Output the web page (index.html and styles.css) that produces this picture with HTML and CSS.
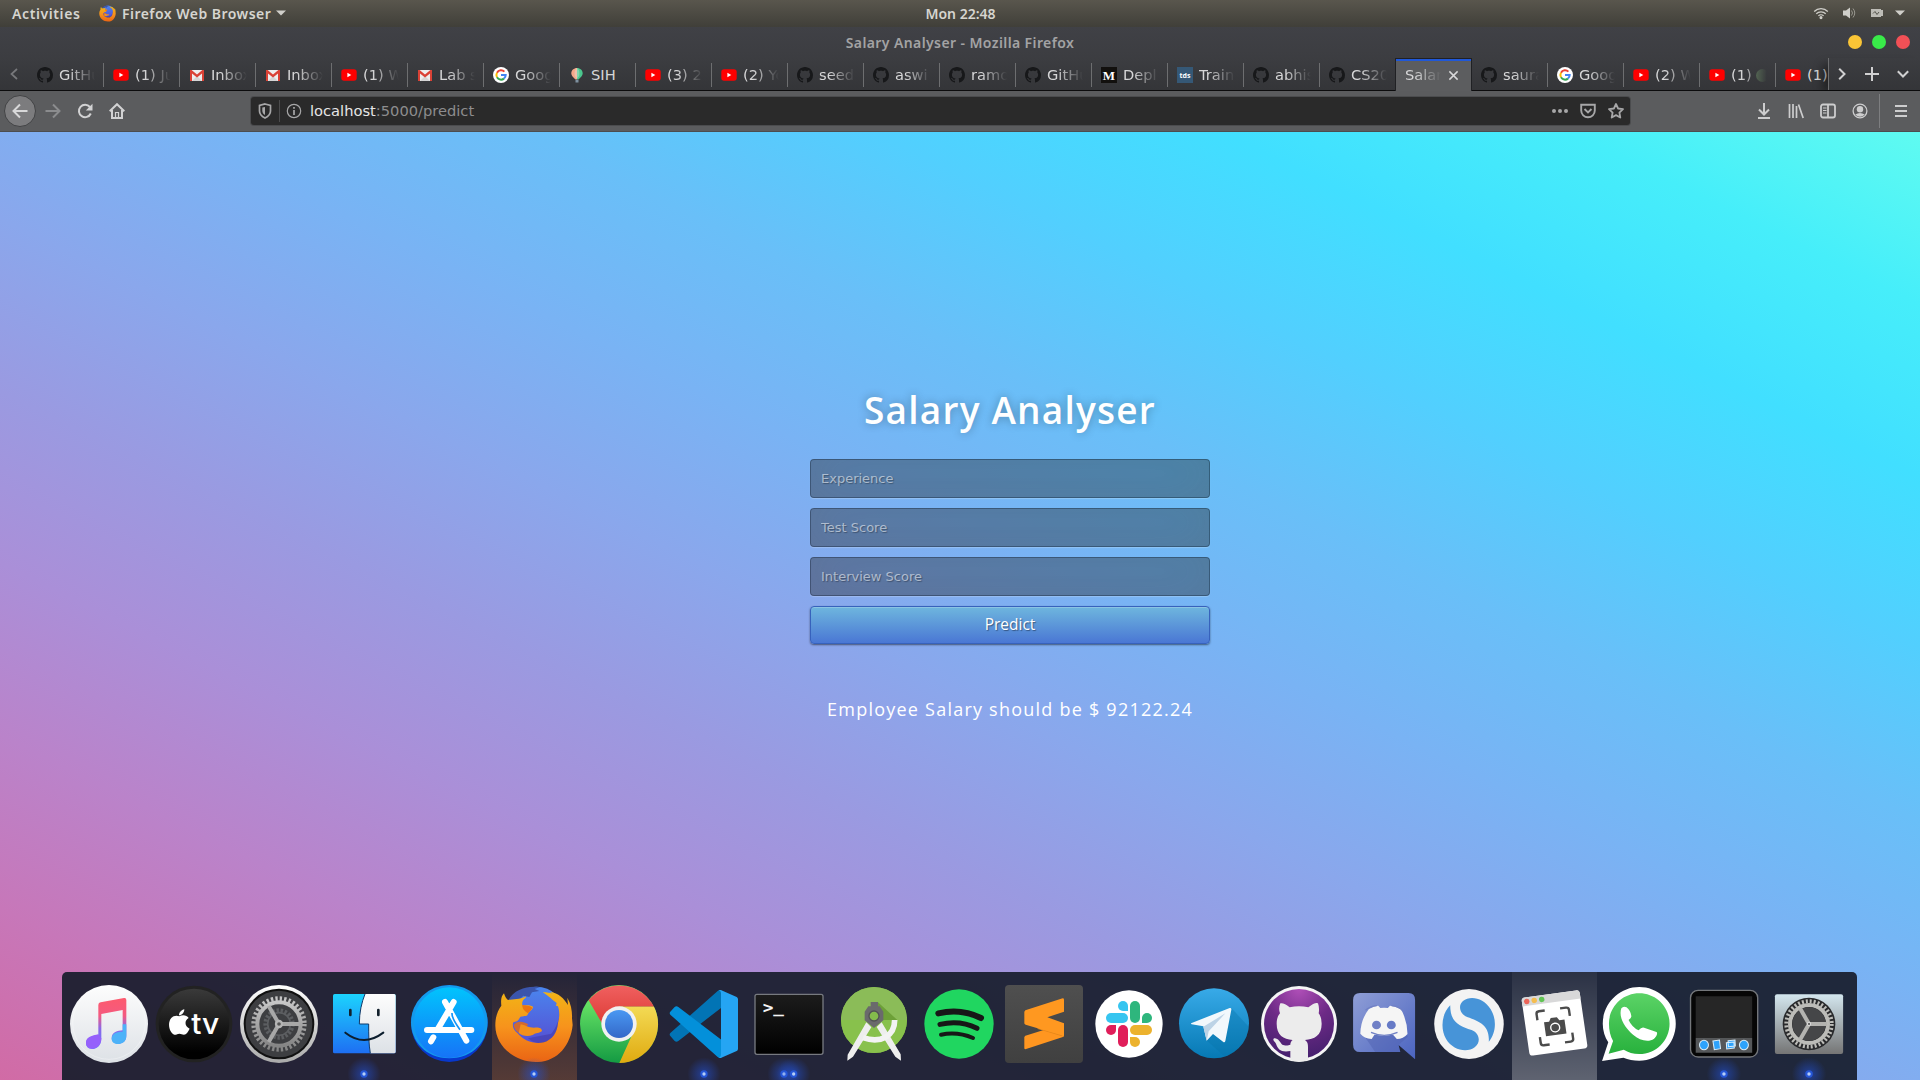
FILE: index.html
```html
<!DOCTYPE html>
<html lang="en">
<head>
<meta charset="utf-8">
<title>Salary Analyser</title>
<link rel="stylesheet" href="styles.css">
</head>
<body>
<svg class="defs" aria-hidden="true">
  <defs>
    <linearGradient id="fox" x1="0" y1="0" x2="0" y2="1"><stop offset="0" stop-color="#f2b416"/><stop offset=".5" stop-color="#f7931c"/><stop offset="1" stop-color="#ea6414"/></linearGradient>
    <linearGradient id="foxblue" x1="0" y1="0" x2="0" y2="1"><stop offset="0" stop-color="#4a86ee"/><stop offset="1" stop-color="#5550d4"/></linearGradient>
    <linearGradient id="musicnote" x1="0" y1="0" x2="0" y2="1"><stop offset="0" stop-color="#fd5a6e"/><stop offset=".35" stop-color="#f45a80"/><stop offset=".6" stop-color="#8a68e8"/><stop offset="1" stop-color="#6a7cff"/></linearGradient>
    <linearGradient id="white" x1="0" y1="0" x2="0" y2="1"><stop offset="0" stop-color="#fdfdfd"/><stop offset="1" stop-color="#dde1e6"/></linearGradient>
    <linearGradient id="black" x1="0" y1="0" x2="0" y2="1"><stop offset="0" stop-color="#3a3a3a"/><stop offset=".9" stop-color="#000"/></linearGradient>
    <linearGradient id="steel" x1="0" y1="0" x2="0" y2="1"><stop offset="0" stop-color="#fff"/><stop offset="1" stop-color="#aaa"/></linearGradient>
    <linearGradient id="gear" x1="0" y1="0" x2="0" y2="1"><stop offset="0" stop-color="#c6c6c6"/><stop offset="1" stop-color="#858585"/></linearGradient>
    <linearGradient id="finder" x1="0" y1="0" x2="0" y2="1"><stop offset="0" stop-color="#1cd3fd"/><stop offset="1" stop-color="#1e6ff3"/></linearGradient>
    <linearGradient id="store" x1="0" y1="0" x2="0" y2="1"><stop offset="0" stop-color="#01c4fd"/><stop offset="1" stop-color="#1673f7"/></linearGradient>
    <linearGradient id="chromered" x1="0" y1="0" x2="0" y2="1"><stop offset="0" stop-color="#f06060"/><stop offset="1" stop-color="#dd3c36"/></linearGradient>
    <linearGradient id="chromegreen" x1="0" y1="0" x2="0" y2="1"><stop offset="0" stop-color="#63e063"/><stop offset=".25" stop-color="#63e063"/><stop offset="1" stop-color="#149a43"/></linearGradient>
    <linearGradient id="chromeyellow" x1="0" y1="0" x2="0" y2="1"><stop offset="0" stop-color="#f3da54"/><stop offset="1" stop-color="#e0aa10"/></linearGradient>
    <linearGradient id="chromeblue" x1="0" y1="0" x2="0" y2="1"><stop offset="0" stop-color="#4a98f2"/><stop offset="1" stop-color="#3468c8"/></linearGradient>
    <linearGradient id="term" x1="0" y1="0" x2="0" y2="1"><stop offset="0" stop-color="#1c1c1c"/><stop offset="1" stop-color="#000"/></linearGradient>
    <linearGradient id="telegram" x1="0" y1="0" x2="0" y2="1"><stop offset="0" stop-color="#38aae8"/><stop offset="1" stop-color="#0679b4"/></linearGradient>
    <radialGradient id="octo" cx=".5" cy="0" r="1"><stop offset="0" stop-color="#b04fb8"/><stop offset=".5" stop-color="#6d2a86"/><stop offset="1" stop-color="#45206e"/></radialGradient>
    <linearGradient id="discord" x1="0" y1="0" x2="1" y2="1"><stop offset="0" stop-color="#8f9ed6"/><stop offset="1" stop-color="#4b64c0"/></linearGradient>
    <linearGradient id="whatsapp" x1="0" y1="0" x2="0" y2="1"><stop offset="0" stop-color="#5bd366"/><stop offset="1" stop-color="#28b13d"/></linearGradient>
    <linearGradient id="plate" x1="0" y1="0" x2="0" y2="1"><stop offset="0" stop-color="#d3e6ee"/><stop offset="1" stop-color="#757575"/></linearGradient>
    <linearGradient id="sublime" x1="0" y1="0" x2="0" y2="1"><stop offset="0" stop-color="#4f4f4f"/><stop offset="1" stop-color="#404040"/></linearGradient>
    <radialGradient id="glow"><stop offset="0" stop-color="#2352d8" stop-opacity=".6"/><stop offset="1" stop-color="#2352d8" stop-opacity="0"/></radialGradient>
    <symbol id="dot" viewBox="0 0 120 120" overflow="visible"><circle cx="60" cy="60" r="50" fill="url(#glow)"/><circle cx="60" cy="60" r="11" fill="#2656d6"/><circle cx="60" cy="60" r="5" fill="#b4cdf8"/></symbol>
    <symbol id="gh" viewBox="0 0 16 16"><path d="M8 0C3.58 0 0 3.58 0 8c0 3.54 2.29 6.53 5.47 7.59.4.07.55-.17.55-.38 0-.19-.01-.82-.01-1.49-2.01.37-2.53-.49-2.69-.94-.09-.23-.48-.94-.82-1.13-.28-.15-.68-.52-.01-.53.63-.01 1.08.58 1.23.82.72 1.21 1.87.87 2.33.66.07-.52.28-.87.51-1.07-1.78-.2-3.64-.89-3.64-3.95 0-.87.31-1.59.82-2.15-.08-.2-.36-1.02.08-2.12 0 0 .67-.21 2.2.82.64-.18 1.32-.27 2-.27s1.36.09 2 .27c1.53-1.04 2.2-.82 2.2-.82.44 1.1.16 1.92.08 2.12.51.56.82 1.27.82 2.15 0 3.07-1.87 3.75-3.65 3.95.29.25.54.73.54 1.48 0 1.07-.01 1.93-.01 2.2 0 .21.15.46.55.38A8.01 8.01 0 0 0 16 8c0-4.42-3.58-8-8-8z" fill="#17181a"/></symbol>
    <symbol id="yt" viewBox="0 0 16 16"><rect x=".3" y="2.2" width="15.4" height="11.6" rx="2.8" fill="#f00"/><path d="M6.4 5.7v4.6L10.3 8z" fill="#fff"/></symbol>
    <symbol id="gm" viewBox="0 0 16 16"><path d="M1 3h14v11H1z" fill="#eee"/><path d="M3 14l5-5 5 5z" fill="#d5d5d5"/><path d="M1 3h1.6L8 7.6 13.4 3H15v11h-2V6.5L8 10.6 3 6.5V14H1z" fill="#da4236"/></symbol>
    <symbol id="gg" viewBox="0 0 16 16"><circle cx="8" cy="8" r="8" fill="#fff"/><g fill="none" stroke-width="2"><path d="M4 5.7A4.7 4.7 0 0 1 11.4 4.6" stroke="#ea4335"/><path d="M4 5.7A4.7 4.7 0 0 0 4 10.3" stroke="#fbbc05"/><path d="M4 10.3A4.7 4.7 0 0 0 11 11.6" stroke="#34a853"/><path d="M11 11.6A4.7 4.7 0 0 0 12.7 8H8" stroke="#4285f4"/></g></symbol>
    <symbol id="sih" viewBox="0 0 16 16"><path d="M8 1C4.800 1 2.300 3.300 2.300 6.200 2.300 9 5.500 11.500 6.500 12.500H8z" fill="#f5a88a"/><path d="M8 1c3.200 0 5.700 2.300 5.700 5.200 0 2.800-3.200 5.300-4.200 6.300H8z" fill="#4bc78e"/><path d="M8 1c-2 1.500-3 4-2.200 8L8 12zM8 1c2 1.500 3 4 2.200 8L8 12z" fill="#e8f1ea" opacity=".35"/><rect x="6.500" y="12.800" width="3" height="2.700" fill="#7f91a0"/></symbol>
    <symbol id="med" viewBox="0 0 16 16"><path d="M0 0h16v16H0z" fill="#12100e"/><text x="8" y="12.500" text-anchor="middle" font-family="Liberation Serif, serif" font-weight="bold" font-size="13" fill="#fff">M</text></symbol>
    <symbol id="tds" viewBox="0 0 16 16"><path d="M0 0h16v16H0z" fill="#355876"/><text x="8" y="10.500" text-anchor="middle" font-family="Open Sans, sans-serif" font-weight="bold" font-size="7" fill="#fff">tds</text></symbol>
    <symbol id="firefox" viewBox="12 60 240 234"><circle cx="139" cy="150" r="85" fill="url(#foxblue)"/><path d="M52 112C70 72 110 62 150 66l-16 6 14 6-22 4-8 14-18-4-12 12-20 8z" fill="#3b55ac"/><path d="M212 130q8 30-6 56-14 46-56 50-20-2-36-16l70-14q24-30 28-76z" fill="#4440b0" opacity=".7"/><path d="M42 85c3 11 6 15 12 20 16-4 36-2 52-10 4-2 2 4-4 8-6 6-6 12-5 18 12 0 22-2 32 4 0 10-12 12-17 26-6 4-18 2-22 6-4 8-6 12-20 15-4 10 0 24 12 32 20 24 50 34 80 28 24-8 40-28 42-58 6-24 4-36 0-50l-6-2 2-8c-12-8-22-20-42-32 14 0 22 2 30 4l-8-6c26 4 42 20 54 40l-2-22c12 20 15 44 14 62l2 20c-6 60-44 108-104 111C78 294 17 246 16 182c0-26 6-44 18-60-2-20 0-28 8-37z" fill="url(#fox)"/><path d="M97 119c10 4 20 0 31 10-5 6-8 8-14 16-10-6-18-14-17-26zM71 180c8-12 26-14 44-2-8 8-12 14-6 24-16 6-34 2-38-22z" fill="#e96b10" opacity=".85"/><path d="M92 178c18 4 24 10 40 10 12-2 24 0 24 10-8 8-18 4-28 12-16 6-32 2-42-6z" fill="#f2901c"/></symbol>
  </defs>
</svg>

<header class="shell">
  <div class="shell-left">
    <span class="activities">Activities</span>
    <svg class="shell-fox"><use href="#firefox"/></svg>
    <span class="app-name">Firefox Web Browser</span>
    <svg width="10" height="6" viewBox="0 0 10 6"><path d="M0 .5h10L5 5.500z" fill="#d0cfca"/></svg>
  </div>
  <span class="clock">Mon 22:48</span>
  <div class="shell-right">
    <svg width="16" height="16" viewBox="0 0 16 16" fill="none" stroke="#d0cfca" stroke-width="1.300"><path d="M1.200 6.500a9.600 9.600 0 0 1 13.600 0M3.300 8.800a6.600 6.600 0 0 1 9.400 0M5.400 10.900a3.700 3.700 0 0 1 5.200 0"/><circle cx="8" cy="12.600" r=".9" fill="#d0cfca"/></svg>
    <svg width="16" height="16" viewBox="0 0 16 16"><path d="M2 5.500h3L9 2.500v11l-4-3H2z" fill="#d0cfca"/><path d="M10.500 5.500q2 2.500 0 5M12 3.500q3.500 4.500 0 9" fill="none" stroke="#999890"/></svg>
    <svg width="16" height="16" viewBox="0 0 16 16"><path d="M2 4h10v1h2v6h-2v1H2z" fill="#bdbcb6"/><path d="M4 8.500l2-2 2 3 2-2.500" fill="none" stroke="#55544c"/></svg>
    <svg width="10" height="6" viewBox="0 0 10 6"><path d="M0 .5h10L5 5.500z" fill="#d0cfca"/></svg>
  </div>
</header>

<div class="titlebar">
  <span></span>
  <span class="window-title">Salary Analyser - Mozilla Firefox</span>
  <div class="window-buttons"><i class="min"></i><i class="max"></i><i class="close"></i></div>
</div>

<nav class="tabbar">
  <div class="scroll-left"><svg width="8" height="12" viewBox="0 0 8 12"><path d="M7 1L1.500 6 7 11" fill="none" stroke="#77787b" stroke-width="1.700"/></svg></div>
  <div class="tabs">
    <div class="tab"><svg><use href="#gh"/></svg><span>GitHub</span></div>
    <div class="tab"><svg><use href="#yt"/></svg><span>(1) Ju</span></div>
    <div class="tab"><svg><use href="#gm"/></svg><span>Inbox</span></div>
    <div class="tab"><svg><use href="#gm"/></svg><span>Inbox</span></div>
    <div class="tab"><svg><use href="#yt"/></svg><span>(1) W</span></div>
    <div class="tab"><svg><use href="#gm"/></svg><span>Lab s</span></div>
    <div class="tab"><svg><use href="#gg"/></svg><span>Goog</span></div>
    <div class="tab"><svg><use href="#sih"/></svg><span class="short">SIH</span></div>
    <div class="tab"><svg><use href="#yt"/></svg><span>(3) 2</span></div>
    <div class="tab"><svg><use href="#yt"/></svg><span>(2) Yo</span></div>
    <div class="tab"><svg><use href="#gh"/></svg><span>seed</span></div>
    <div class="tab"><svg><use href="#gh"/></svg><span>aswi</span></div>
    <div class="tab"><svg><use href="#gh"/></svg><span>ramo</span></div>
    <div class="tab"><svg><use href="#gh"/></svg><span>GitHu</span></div>
    <div class="tab"><svg><use href="#med"/></svg><span>Depl</span></div>
    <div class="tab"><svg><use href="#tds"/></svg><span>Train</span></div>
    <div class="tab"><svg><use href="#gh"/></svg><span>abhis</span></div>
    <div class="tab before-active"><svg><use href="#gh"/></svg><span>CS20</span></div>
    <div class="tab active"><span>Salar</span><svg class="x" viewBox="0 0 12 12"><path d="M1.500 1.500l9 9M10.500 1.500l-9 9" stroke="#d8d8d9" stroke-width="1.600"/></svg></div>
    <div class="tab"><svg><use href="#gh"/></svg><span>saura</span></div>
    <div class="tab"><svg><use href="#gg"/></svg><span>Goog</span></div>
    <div class="tab"><svg><use href="#yt"/></svg><span>(2) W</span></div>
    <div class="tab"><svg><use href="#yt"/></svg><span>(1) <b class="moon"></b></span></div>
    <div class="tab"><svg><use href="#yt"/></svg><span class="short">(1)</span></div>
  </div>
  <div class="tab-tools">
    <svg width="8" height="12" viewBox="0 0 8 12"><path d="M1.200.8L6.500 6l-5.300 5.200" fill="none" stroke="#d0d0d1" stroke-width="2"/></svg>
    <svg width="14" height="14" viewBox="0 0 14 14"><path d="M7 0v14M0 7h14" stroke="#d0d0d1" stroke-width="2"/></svg>
    <svg width="12" height="8" viewBox="0 0 12 8"><path d="M.8 1.200L6 6.500l5.200-5.300" fill="none" stroke="#d0d0d1" stroke-width="2"/></svg>
  </div>
</nav>

<div class="toolbar">
  <div class="nav-buttons">
    <div class="back"><svg width="16" height="16" viewBox="0 0 16 16"><path d="M15.500 8H1.500M8 1.500L1.500 8 8 14.500" fill="none" stroke="#d8d8d9" stroke-width="2"/></svg></div>
    <svg width="16" height="16" viewBox="0 0 16 16"><path d="M.5 8h14M8 1.500L14.500 8 8 14.500" fill="none" stroke="#8b8c8e" stroke-width="2"/></svg>
    <svg width="16" height="16" viewBox="0 0 16 16"><path d="M12.900 4A6.200 6.200 0 1 0 13.800 10.500" fill="none" stroke="#d2d2d3" stroke-width="2"/><path d="M15.500.8v6.700H8.800z" fill="#d2d2d3"/></svg>
    <svg width="16" height="16" viewBox="0 0 16 16"><path d="M.7 8.300L8 1.200l7.300 7.100M3 7v8h10V7" fill="none" stroke="#d2d2d3" stroke-width="2"/><path d="M6.500 9.500h3V15h-3z" fill="none" stroke="#d2d2d3" stroke-width="1.200"/></svg>
  </div>
  <div class="urlbar">
    <svg class="shield" width="14" height="16" viewBox="0 0 14 16"><path d="M7 1L12.500 2.500V8c0 3.500-2.500 5.500-5.500 7-3-1.500-5.500-3.500-5.500-7V2.500z" fill="none" stroke="#a7a7a8" stroke-width="1.700"/><path d="M7 4v8C5.300 11 4.300 9.500 4.300 8V4.500z" fill="#a7a7a8"/></svg>
    <svg class="info" width="16" height="16" viewBox="0 0 16 16"><circle cx="8" cy="8" r="6.700" fill="none" stroke="#a7a7a8" stroke-width="1.200"/><path d="M8 7v5M8 4v1.800" stroke="#a7a7a8" stroke-width="1.700"/></svg>
    <span class="url"><b>localhost</b>:5000/predict</span>
    <svg width="16" height="16" viewBox="0 0 16 16" fill="#a7a7a8"><circle cx="2" cy="8" r="2"/><circle cx="8" cy="8" r="2"/><circle cx="14" cy="8" r="2"/></svg>
    <svg width="16" height="16" viewBox="0 0 16 16" fill="none" stroke="#a7a7a8" stroke-width="1.900"><path d="M1.200 1.800h13.600V7.500a6.800 6.800 0 0 1-13.600 0z"/><path d="M4.500 6l3.500 3.500L11.500 6"/></svg>
    <svg width="16" height="16" viewBox="0 0 16 16"><path d="M8 1l2.100 4.500 4.900.7-3.600 3.400.9 4.900L8 12.100l-4.300 2.400.9-4.900L1 6.200l4.900-.7z" fill="none" stroke="#a7a7a8" stroke-width="1.800" stroke-linejoin="round"/></svg>
  </div>
  <div class="tools">
    <svg width="16" height="16" viewBox="0 0 16 16" fill="none" stroke="#cdcdce" stroke-width="2"><path d="M8 0v11M3 6.500l5 5 5-5M2 15h12"/></svg>
    <svg width="16" height="16" viewBox="0 0 16 16" fill="none" stroke="#cdcdce" stroke-width="1.700"><path d="M1.500 1v14M5 1v14M8.500 3v12M10.500 1.500L15.200 15"/></svg>
    <svg width="16" height="16" viewBox="0 0 16 16" fill="none" stroke="#cdcdce" stroke-width="1.800"><rect x="1" y="1.500" width="14" height="13" rx="2"/><path d="M8 2v12"/><path d="M3 5h3.500M3 7.500h3.500M3 10h3.500" stroke-width="1.100"/></svg>
    <svg width="16" height="16" viewBox="0 0 16 16"><circle cx="8" cy="8" r="6.900" fill="none" stroke="#cdcdce" stroke-width="1.300"/><circle cx="8" cy="6.200" r="3.200" fill="#cdcdce"/><path d="M3.200 11.500Q8 8.500 12.800 11.500 8 16 3.200 11.500z" fill="#cdcdce"/></svg>
    <div class="menu"><svg width="12" height="14" viewBox="0 0 12 14" stroke="#cdcdce" stroke-width="2"><path d="M0 2h12M0 7h12M0 12h12"/></svg></div>
  </div>
</div>

<main class="page">
  <form class="analyser">
    <h1>Salary Analyser</h1>
    <input type="text" placeholder="Experience">
    <input type="text" placeholder="Test Score">
    <input type="text" placeholder="Interview Score">
    <button type="button">Predict</button>
    <p>Employee Salary should be $ 92122.24</p>
  </form>
</main>

<footer class="dock">
  <svg viewBox="51 21 255 324"><circle cx="177" cy="177" r="117" fill="url(#white)"/><circle cx="177" cy="174" r="109" fill="none" stroke="#fff" stroke-opacity=".5" stroke-width="2"/><path d="M145 120q0-7 7-8l70-13q7-1 7 6v107c0 18-14 24-24 24-12 0-20-7-20-16 0-20 18-22 33-24v-61l-64 12v74c0 22-16 31-27 31-13 0-19-8-19-17 0-19 19-22 37-26z" fill="url(#musicnote)"/><path d="M218 178v22c-15 0-33 3-33 22 0 9 8 15 20 15 10 0 24-6 24-24v-35z" fill="#4cb2f8"/><path d="M145 208c-18 4-37 7-37 26 0 9 6 17 19 17 11 0 27-9 27-31z" fill="#9560fb"/></svg>
  <svg viewBox="306 21 255 324"><circle cx="432" cy="177" r="115" fill="#222"/><circle cx="432" cy="177" r="106" fill="url(#black)"/><path d="M388 154c8-5 22-5 28 5-14 8-12 26 3 32-5 10-10 18-17 18-6 0-8-3-14-3s-9 4-15 3c-9-2-19-21-15-38 3-16 18-22 30-17zM387 151c0-9 7-16 16-18 0 10-7 18-16 18z" fill="#fff"/><text x="424" y="208" font-family="Inter, sans-serif" font-size="88" textLength="84" lengthAdjust="spacingAndGlyphs" font-weight="500" fill="#fff">tv</text></svg>
  <svg viewBox="561 21 255 324"><circle cx="687" cy="177" r="117" fill="url(#steel)"/><circle cx="687" cy="177" r="106" fill="#111"/><circle cx="687" cy="177" r="100" fill="#3d3e41"/><g fill="none"><circle cx="687" cy="177" r="40" stroke="#5c5e61" stroke-width="14" stroke-dasharray="7 5"/><circle cx="687" cy="177" r="34" stroke="#5c5e61" stroke-width="5"/><circle cx="687" cy="177" r="76" stroke="url(#gear)" stroke-width="14" stroke-dasharray="7 6.260"/><circle cx="687" cy="177" r="65" stroke="url(#gear)" stroke-width="12"/><path d="M687 177h62M687 177l-31-54M687 177l-31 54" stroke="#a8a8a8" stroke-width="12"/><circle cx="687" cy="177" r="9" fill="#555" stroke="#b5b5b5" stroke-width="7"/></g></svg>
  <svg viewBox="816 21 255 324"><rect x="849" y="87" width="188" height="178" rx="5" fill="url(#finder)"/><path d="M945 87h87q5 0 5 5v168q0 5-5 5h-71c-5-30-5-55-5-88h-28c0-35 7-65 17-90z" fill="url(#white)"/><path d="M945 87c-10 25-17 55-17 90h28c0 33 0 58 5 88" fill="none" stroke="#103a6a" stroke-width="3"/><path d="M901 135v15M985 135v15" stroke="#12202c" stroke-width="8" stroke-linecap="round"/><path d="M886 203q56 44 114 0" fill="none" stroke="#0c1d2d" stroke-width="6" stroke-linecap="round"/><use href="#dot" x="882" y="267" width="120" height="120"/></svg>
  <svg viewBox="1071 21 255 324"><circle cx="1198" cy="176" r="115" fill="#0838cc"/><path d="M1083 172a115 112 0 0 1 230 0c0 55-42 108-115 108s-115-53-115-108z" fill="#149aec"/><circle cx="1198" cy="173" r="106" fill="url(#store)"/><g stroke="#fff" stroke-width="18" stroke-linecap="round"><path d="M1131 195h133M1211 111l-48 82M1185 111l64 116M1150 217l-7 12"/></g><path d="M1206 144q-1 16 24 50" fill="none" stroke="#1195fa" stroke-width="5"/></svg>
  <svg class="running" viewBox="6 21 255 324"><use href="#firefox" x="12" y="60" width="240" height="234"/><use href="#dot" x="72" y="267" width="120" height="120"/></svg>
  <svg viewBox="261 21 255 324"><circle cx="387" cy="177" r="117" fill="url(#chromegreen)"/><path d="M296 106A117 117 0 0 1 492 125H387l-50 52z" fill="url(#chromered)"/><path d="M387 125h105A117 117 0 0 1 388 294l44-97z" fill="url(#chromeyellow)"/><circle cx="387" cy="177" r="53" fill="#f1f1f1"/><circle cx="387" cy="177" r="42" fill="url(#chromeblue)"/></svg>
  <svg viewBox="516 21 255 324"><path d="M541 204q-4 5 0 9l13 15q5 4 11 0L694 128V76q-5-3-11 2z" fill="#0274b5"/><path d="M541 149q-4-5 0-9l13-14q5-4 11 0l129 98v54q-5 3-11-2z" fill="#0390da"/><path d="M686 75q4-1 8 1l46 20q4 2 4 7v148q0 5-4 7l-46 20q-5 2-8 1 7-3 7-9V84q0-6-7-9z" fill="#25a5f3"/><use href="#dot" x="582" y="267" width="120" height="120"/></svg>
  <svg viewBox="771 21 255 324"><rect x="795" y="88" width="204" height="180" rx="6" fill="url(#term)" stroke="#777a80" stroke-width="4"/><text x="818" y="145" font-family="DejaVu Sans Mono, monospace" font-weight="bold" font-size="48" textLength="64" lengthAdjust="spacingAndGlyphs" fill="#f4f4f4">&gt;_</text><use href="#dot" x="822" y="267" width="120" height="120"/><use href="#dot" x="851" y="267" width="120" height="120"/></svg>
  <svg viewBox="1026 21 255 324"><circle cx="1152" cy="165" r="99" fill="#7ab342"/><path d="M1053 165a99 99 0 0 1 198 0z" fill="#8bbc58"/><path d="M1053 165a99 99 0 0 0 198 0z" fill="#88c14c"/><path d="M1164 112l58 53h-42l-30-20z" fill="#6da038"/><path d="M1129 172l-56 97-1 18 17-12 55-88zM1175 172l57 96 1 19-17-12-56-89z" fill="#eee"/><path d="M1214 165c0 48-42 72-95 53" fill="none" stroke="#f3f3f3" stroke-width="17"/><path d="M1142 111h22v14h-22zM1135 124h34l11 16v26l-28 23-28-23v-26z" fill="#6a6a6c"/><circle cx="1152" cy="153" r="15" fill="#84bb4c" stroke="#515154" stroke-width="4"/></svg>
  <svg viewBox="-9 21 255 324"><circle cx="117" cy="177" r="104" fill="#20d660"/><g fill="none" stroke="#171717" stroke-linecap="round"><path d="M55 145q68-16 128 14" stroke-width="18"/><path d="M60 178q60-14 111 12" stroke-width="15"/><path d="M63 209q50-10 96 10" stroke-width="12"/></g></svg>
  <svg viewBox="246 21 255 324"><rect x="255" y="60" width="234" height="234" rx="12" fill="url(#sublime)"/><path d="M316 212l115-36v39l-115 38q-3 0-3-4v-33z" fill="#ff9620"/><path d="M431 215l-80-24 40-14z" fill="#e5861a"/><path d="M316 136l112-36q4 0 4 4v36l-50 17 50 18v38l-115-34q-4-1-4-4v-35z" fill="#ff9820"/></svg>
  <svg viewBox="501 21 255 324"><circle cx="627" cy="177" r="101" fill="#fff"/><g fill="#36c5f0"><path d="M624 138h-15a15 15 0 1 1 15-15z"/><rect x="558" y="144" width="66" height="30" rx="15"/></g><g fill="#2eb67d"><rect x="630" y="108" width="30" height="66" rx="15"/><path d="M666 174v-15a15 15 0 1 1 15 15z"/></g><g fill="#ecb22e"><rect x="630" y="180" width="66" height="30" rx="15"/><path d="M630 216h15a15 15 0 1 1-15 15z"/></g><g fill="#e01e5a"><rect x="594" y="180" width="30" height="66" rx="15"/><path d="M588 180v15a15 15 0 1 1-15-15z"/></g></svg>
  <svg viewBox="756 21 255 324"><circle cx="882" cy="175" r="105" fill="url(#telegram)"/><path d="M934 129l52 56a105 105 0 0 1-72 90l-58-52z" fill="#0674aa" opacity=".35"/><path d="M815 174l114-45q6-1 5 5l-18 94q-2 6-7 2l-30-23-19 20-10-43-35-6q-4-2 0-4z" fill="#f2f8fc"/><path d="M850 185l66-40-50 54-6 28z" fill="#bcd3e6"/></svg>
  <svg viewBox="1011 21 255 324"><circle cx="1137" cy="177" r="114" fill="#f5f5f5"/><circle cx="1137" cy="177" r="105" fill="url(#octo)"/><path d="M1081 115q10-3 28 12 28-6 56 0 20-16 29-12 5 14 2 30 9 11 9 31c0 36-22 46-50 49 8 5 9 12 9 22v38q-27 9-53 0v-27c-28 5-37-5-43-22-3-8-12-9-6-16 12-2 17 11 25 19 6 3 18 3 24 0 0-6 3-11 7-14-28-3-48-14-48-49 0-17 5-25 10-31-4-10-3-21 1-30z" fill="#ececec"/></svg>
  <svg viewBox="5.800 21 246.800 324" preserveAspectRatio="none"><path d="M58 84h141q19 0 19 21v178l-48-43 5 21H58q-20 0-20-22V105q0-21 20-21z" fill="url(#discord)"/><path d="M72 215l30 46h73l-5-21 27-25-40-70z" fill="#4d60b0" opacity=".45"/><path d="M84 132q17-10 27-10l6 7q11-1 22 0l6-7q15 1 32 11 18 32 19 74-12 15-31 15l-11-13-26 3-28-3-8 13q-22-2-33-16 1-43 25-74z" fill="#f5f5f5"/><path d="M74 136q12-12 33-14M150 122q20 2 31 14M90 202q38 18 77 0" stroke="#7080c4" stroke-width="4" fill="none"/><circle cx="106" cy="180" r="13" fill="#7080c6"/><circle cx="149" cy="180" r="13" fill="#667ac6"/></svg>
  <svg viewBox="252.600 21 246.800 324" preserveAspectRatio="none"><ellipse cx="374.500" cy="177" rx="101" ry="105" fill="#f3f3f3"/><path d="M320 121C296 145 290 190 308 222c20 35 62 42 84 24 20-18 10-44-10-51-35-12-62-22-62-74z" fill="#4794d8"/><path d="M432 230c20-24 25-66 5-98-20-33-58-42-80-24-16 14-8 41 12 48 40 14 66 28 63 74z" fill="#4794d8"/></svg>
  <svg class="selected" viewBox="499.500 21 246.800 324" preserveAspectRatio="none"><g transform="rotate(-8 622 174)"><rect x="538" y="86" width="170" height="176" rx="10" fill="#fff"/><path d="M538 112V96q0-10 10-10h150q10 0 10 10v16z" fill="#d8d8d9"/><circle cx="552" cy="99" r="8" fill="#ec6559"/><circle cx="574" cy="99" r="8" fill="#f5bd4f"/><circle cx="596" cy="99" r="8" fill="#61c454"/><path d="M575 159v-18q0-8 8-8h17M645 133h17q8 0 8 8v18M670 210v18q0 8-8 8h-17M600 236h-17q-8 0-8-8v-18" fill="none" stroke="#4b4b4b" stroke-width="7"/><path d="M593 168h15l6-10h18l6 10h15v42h-60z" fill="#4b4b4b"/><circle cx="623" cy="188" r="13" fill="none" stroke="#fff" stroke-width="4"/></g></svg>
  <svg viewBox="746.300 21 246.800 324" preserveAspectRatio="none"><path d="M869 66c58 0 106 50 106 110s-48 111-106 111c-17 0-32-3-46-9l-62 10 18-56c-10-16-16-35-16-56 0-60 48-110 106-110z" fill="#fff"/><path d="M869 85c49 0 88 41 88 91s-39 91-88 91c-18 0-32-5-45-13l-44 12 13-38c-8-15-12-33-12-52 0-50 39-91 88-91z" fill="url(#whatsapp)"/><path d="M817 130q6-8 15-3 12 10 14 26 0 8-8 12 10 22 29 31 9-11 16-8l36 13c5 3-1 16-7 20-17 12-42 5-61-12-24-21-43-52-34-79z" fill="#fff"/></svg>
  <svg viewBox="993.200 21 246.800 324" preserveAspectRatio="none"><rect x="1018" y="76" width="195" height="200" rx="22" fill="#060606" stroke="#74777b" stroke-width="4"/><path d="M1033 94h164v125h-164z" fill="#262626"/><path d="M1033 219h164v44h-164z" fill="#555759"/><g fill="#2da2fb" stroke="#d9edf9" stroke-width="3"><ellipse cx="1057" cy="240" rx="13" ry="14"/><path d="M1083 228l19-3 3 26-18 3zM1127 227l20-2 1 18-20 2zM1122 233l22-2 1 18-22 3z"/><ellipse cx="1173" cy="240" rx="13" ry="14"/></g><use href="#dot" x="1055" y="267" width="120" height="120"/></svg>
  <svg viewBox="1240 21 246.800 324" preserveAspectRatio="none"><rect x="1263" y="88" width="198" height="179" rx="6" fill="url(#plate)"/><g transform="translate(1362 177) scale(.968 1)" fill="none"><circle r="79" fill="#292a2c"/><circle r="68" stroke="#bcbcb8" stroke-width="12" stroke-dasharray="6 5.870"/><circle r="57" stroke="#bcbcb8" stroke-width="12"/><circle r="50" fill="#454648"/><path d="M0 0h54M0 0l-27-47M0 0l-27 47" stroke="#b3b3b0" stroke-width="12"/><circle r="5" fill="#666" stroke="#ddd" stroke-width="3"/></g><use href="#dot" x="1302" y="267" width="120" height="120"/></svg>
</footer>
</body>
</html>
```
FILE: styles.css
```css
* { box-sizing: border-box; }
html, body { height: 100%; }
body {
  margin: 0;
  display: flex;
  flex-direction: column;
  overflow: hidden;
  position: relative;
  font-family: "DejaVu Sans", sans-serif;
  background: #38393d;
}
svg { display: block; flex: none; }
.defs { position: absolute; width: 0; height: 0; }

/* desktop top bar */
.shell, .titlebar {
  display: grid;
  grid-template-columns: 1fr auto 1fr;
  align-items: center;
  font-family: "Noto Sans", sans-serif;
  font-weight: 600;
  font-size: 14px;
  padding-bottom: 1px;
}
.shell {
  height: 27px;
  background: linear-gradient(#59564d, #403f39);
  color: #d6d5d0;
}
.shell-left { display: flex; align-items: center; padding-left: 12px; }
.activities { width: 87px; letter-spacing: .6px; }
.shell-fox { width: 17px; height: 17px; margin-right: 6px; }
.app-name { width: 149px; margin-right: 5px; white-space: nowrap; letter-spacing: .47px; }
.clock { letter-spacing: 0; padding-left: 1px; }
.shell-right { display: flex; align-items: center; justify-content: flex-end; gap: 12px; padding-right: 15px; }
.shell-right svg:last-child { margin-left: -2px; }

.titlebar { height: 31px; background: linear-gradient(#404146, #3c3d41); color: #a3a3a4; }
.window-title { font-size: 14px; letter-spacing: .4px; }
.window-buttons { display: flex; justify-content: flex-end; gap: 10px; padding-right: 10px; }
.window-buttons i { width: 14px; height: 14px; border-radius: 50%; }
.min { background: #fac536; }
.max { background: #39ea49; }
.close { background: #f25056; }

/* tab strip */
.tabbar {
  height: 33px;
  display: flex;
  background: linear-gradient(#3c3d41, #343538);
  border-bottom: 1px solid #0c0c0d;
}
.scroll-left { width: 28px; display: flex; align-items: center; padding-left: 10px; }
.tabs { width: 1800px; display: flex; overflow: hidden; margin-bottom: -1px; }
.tab {
  flex: none;
  width: 76px;
  height: 33px;
  padding: 0 9px;
  display: flex;
  align-items: center;
  gap: 6px;
  font-size: 14.667px;
  color: #d6d6d7;
  background: linear-gradient(#6d6e70, #6d6e70) 75px 5px / 1px 24px no-repeat;
}
.tab svg { width: 16px; height: 16px; margin-top: 1px; }
.tab span {
  width: 38px;
  margin-top: -1px;
  overflow: hidden;
  white-space: nowrap;
  -webkit-mask: linear-gradient(90deg, #000 10px, transparent 36px);
  mask: linear-gradient(90deg, #000 10px, transparent 36px);
}
.tab .short { -webkit-mask: none; mask: none; }
.before-active { background: none; }
.tab.active {
  width: 77px;
  margin-left: -1px;
  padding: 0 9px 1px;
  border: solid #202124;
  border-width: 1px 1px 0;
  background: linear-gradient(#2058d8, #2058d8) 0 0 / 100% 2px no-repeat, #5c5d5f;
}
.tab.active span { margin-top: 0; }
.tab.active svg { width: 11px; height: 11px; margin-left: -1px; }
.moon { display: inline-block; width: 13px; height: 13px; border-radius: 50%; background: #78a070; vertical-align: -2px; }
.tab-tools {
  flex: 1;
  display: flex;
  align-items: center;
  gap: 19px;
  padding-left: 9px;
  border-left: 1px solid #6d6e70;
  box-shadow: -8px 4px 8px -2px rgba(0, 0, 0, .35);
}
.tab-tools svg:nth-child(3) { margin-left: -1px; }

/* navigation toolbar */
.toolbar {
  height: 41px;
  display: flex;
  align-items: center;
  background: #5b5c5e;
  border-bottom: 1px solid #4c4d4f;
}
.nav-buttons { width: 251px; display: flex; align-items: center; gap: 16px; padding-left: 4px; }
.back {
  width: 32px;
  height: 32px;
  margin-right: -7px;
  border-radius: 50%;
  background: #7c7c7e;
  border: 1px solid #424345;
  display: grid;
  place-items: center;
}
.urlbar {
  width: 1379px;
  height: 28px;
  display: flex;
  align-items: center;
  gap: 12px;
  padding: 0 6px 0 7px;
  border-radius: 3px;
  background: #2a2a2a;
  box-shadow: 0 0 0 1px #4b4c4e;
}
.info { margin-left: 1px; }
.shield { box-sizing: content-box; padding: 3px 7px 3px 0; margin-right: -7px; border-right: 1px solid #4c4c4d; }
.url { flex: 1; margin: -1px 0 0 -4px; font-size: 14.667px; color: #8d8d8e; }
.url b { font-weight: 400; color: #e6e6e7; }
.tools { flex: 1; display: flex; align-items: center; justify-content: flex-end; gap: 16px; }
.menu { height: 34px; margin-left: -5px; padding: 0 13px 0 15px; border-left: 1px solid #7d7e80; display: flex; align-items: center; }

/* page content */
.page {
  flex: 1;
  padding: 238px 0 0 810px;
  background: linear-gradient(to right top, #d16ba5, #c777b9, #ba83ca, #aa8fd8, #9a9ae1, #8aa7ec, #79b3f4, #69bff8, #52cffe, #41dfff, #46eefa, #5ffbf1);
}
.analyser {
  width: 400px;
  display: flex;
  flex-direction: column;
  font-family: "Open Sans", sans-serif;
  color: #fff;
  text-align: center;
}
.analyser h1 {
  margin: 0 0 9px;
  height: 80px;
  line-height: 80px;
  font-size: 37px;
  font-weight: 600;
  letter-spacing: 1.2px;
  text-shadow: 0 0 10px rgba(0, 0, 0, .3);
}
.analyser input {
  height: 39px;
  margin-bottom: 10px;
  padding: 10px;
  font: 13px "DejaVu Sans", sans-serif;
  color: #fff;
  text-shadow: 1px 1px 1px rgba(0, 0, 0, .3);
  background: rgba(0, 0, 0, .3);
  border: 1px solid rgba(0, 0, 0, .3);
  border-radius: 4px;
  box-shadow: inset 0 -5px 45px rgba(100, 100, 100, .2), 0 1px 1px rgba(255, 255, 255, .2);
}
.analyser input::placeholder { color: rgba(255, 255, 255, .54); }
.analyser button {
  height: 38px;
  padding: 0 0 3px;
  font: 15.500px "Open Sans", sans-serif;
  color: #fff;
  text-shadow: 1px 1px 1px rgba(0, 0, 0, .4);
  background: linear-gradient(#6eb6de, #4a77d4);
  border: 1px solid #3762bc;
  border-radius: 4px;
  box-shadow: inset 0 1px 0 rgba(255, 255, 255, .2), 0 1px 2px rgba(0, 0, 0, .5);
}
.analyser p { margin: 53px 0 0; font-size: 18px; line-height: 25px; letter-spacing: 1.23px; white-space: nowrap; }

/* dock, floating over the page */
.dock {
  position: absolute;
  left: 62px;
  bottom: 0;
  width: 1795px;
  height: 108px;
  padding: 0 5px;
  display: flex;
  background: rgba(23, 28, 43, .92);
  border-radius: 5px 5px 0 0;
}
.dock svg { width: 85px; height: 108px; }
.running { background: linear-gradient(rgba(240, 130, 50, 0), rgba(240, 130, 50, .24)); }
.selected { background: linear-gradient(rgba(255, 255, 255, .05), rgba(255, 255, 255, .28)); }
```
